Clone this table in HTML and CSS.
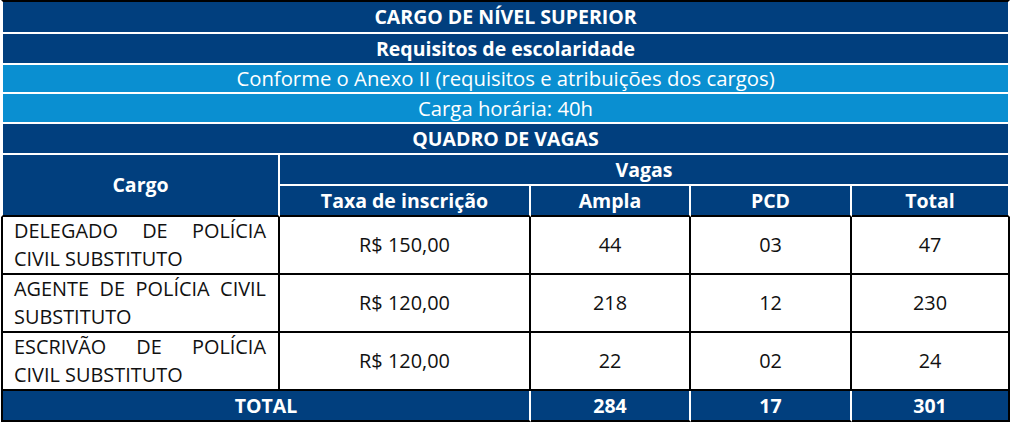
FILE: index.html
```html
<!DOCTYPE html>
<html lang="pt-BR">
<head>
<meta charset="utf-8">
<title>Quadro de vagas</title>
<link rel="stylesheet" href="styles.css">
</head>
<body>
<table class="vagas">
  <colgroup>
    <col class="c-cargo">
    <col class="c-taxa">
    <col class="c-ampla">
    <col class="c-pcd">
    <col class="c-total">
  </colgroup>
  <tbody>
    <tr class="r1"><td colspan="5" class="hd dark bold first top">CARGO DE NÍVEL SUPERIOR</td></tr>
    <tr class="r2"><td colspan="5" class="hd dark bold first">Requisitos de escolaridade</td></tr>
    <tr class="r3"><td colspan="5" class="hd light first">Conforme o Anexo II (requisitos e atribuições dos cargos)</td></tr>
    <tr class="r4"><td colspan="5" class="hd light first">Carga horária: 40h</td></tr>
    <tr class="r5"><td colspan="5" class="hd dark bold first">QUADRO DE VAGAS</td></tr>
    <tr class="r6">
      <td rowspan="2" class="hd dark bold first sep base">Cargo</td>
      <td colspan="4" class="hd dark bold">Vagas</td>
    </tr>
    <tr class="r7">
      <td class="hd dark bold sep base">Taxa de inscrição</td>
      <td class="hd dark bold sep base">Ampla</td>
      <td class="hd dark bold sep base">PCD</td>
      <td class="hd dark bold sep base last">Total</td>
    </tr>
    <tr class="row">
      <td class="bd first name"><span class="jl">DELEGADO DE POLÍCIA</span><span class="ln">CIVIL SUBSTITUTO</span></td>
      <td class="bd">R$ 150,00</td>
      <td class="bd">44</td>
      <td class="bd">03</td>
      <td class="bd">47</td>
    </tr>
    <tr class="row">
      <td class="bd first name"><span class="jl">AGENTE DE POLÍCIA CIVIL</span><span class="ln">SUBSTITUTO</span></td>
      <td class="bd">R$ 120,00</td>
      <td class="bd">218</td>
      <td class="bd">12</td>
      <td class="bd">230</td>
    </tr>
    <tr class="row">
      <td class="bd first name"><span class="jl">ESCRIVÃO DE POLÍCIA</span><span class="ln">CIVIL SUBSTITUTO</span></td>
      <td class="bd">R$ 120,00</td>
      <td class="bd">22</td>
      <td class="bd">02</td>
      <td class="bd">24</td>
    </tr>
    <tr class="tot">
      <td colspan="2" class="tt first">TOTAL</td>
      <td class="tt">284</td>
      <td class="tt">17</td>
      <td class="tt last">301</td>
    </tr>
  </tbody>
</table>
</body>
</html>
```
FILE: styles.css
```css
html, body {
  margin: 0;
  padding: 0;
  background: #ffffff;
}

body {
  padding-left: 1px;
  font-family: "Open Sans", "Liberation Sans", sans-serif;
  font-size: 19.5px;
  color: #000000;
}

.vagas {
  border-collapse: separate;
  border-spacing: 0;
  table-layout: fixed;
  width: 1009px;
}

.c-cargo { width: 279px; }
.c-taxa { width: 251px; }
.c-ampla { width: 160px; }
.c-pcd { width: 161px; }
.c-total { width: 158px; }

.vagas td {
  box-sizing: border-box;
  padding: 0;
  text-align: center;
  vertical-align: middle;
  line-height: 1.3;
  white-space: nowrap;
}

/* header cells */
.vagas .hd {
  color: #ffffff;
  border-right: 2px solid #ffffff;
  border-bottom: 2px solid #ffffff;
}
.vagas .hd.first { border-left: 2px solid #ffffff; }
.vagas .hd.top { border-top: 2px solid #000000; }
.vagas .hd.base { border-bottom: 2px solid #000000; }

.dark { background: #013f7e; }
.light { background: #0a8fd1; font-size: 20.3px; }
.bold { font-weight: 700; }

.r1 td { height: 34px; }
.r2 td { height: 31px; }
.r3 td { height: 29px; }
.r4 td { height: 30px; }
.r5 td { height: 31px; }
.r6 td { height: 31px; }
.r7 td { height: 31px; }

/* body cells */
.vagas .bd {
  height: 58px;
  border-right: 2px solid #000000;
  border-bottom: 2px solid #000000;
  color: #111111;
  font-size: 19.9px;
}
.vagas .bd.first { border-left: 2px solid #000000; }

.vagas td.name {
  text-align: left;
  padding: 0 12px 0 11px;
  line-height: 28px;
  white-space: normal;
}
.jl {
  display: block;
  text-align: justify;
  text-align-last: justify;
}
.ln {
  display: block;
  text-align: left;
}

/* total row */
.vagas .tt {
  height: 31px;
  background: #013f7e;
  color: #ffffff;
  font-weight: 700;
  border-right: 2px solid #ffffff;
  border-bottom: 2px solid #000000;
}
.vagas .tt.first { border-left: 2px solid #000000; }
.vagas .tt.last { border-right: 2px solid #000000; }
```
